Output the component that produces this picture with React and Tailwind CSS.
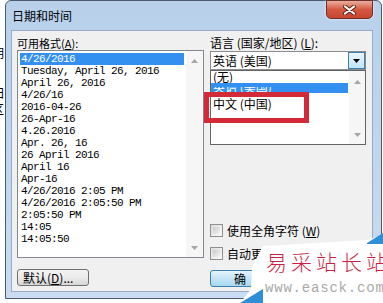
import React from "react";

const formats = [
  "4/26/2016",
  "Tuesday, April 26, 2016",
  "April 26, 2016",
  "4/26/16",
  "2016-04-26",
  "26-Apr-16",
  "4.26.2016",
  "Apr. 26, 16",
  "26 April 2016",
  "April 16",
  "Apr-16",
  "4/26/2016 2:05 PM",
  "4/26/2016 2:05:50 PM",
  "2:05:50 PM",
  "14:05",
  "14:05:50",
];

function UpArrow() {
  return (
    <svg width="7" height="4" viewBox="0 0 7 4">
      <path d="M0 4 L3.5 0 L7 4 Z" fill="#a5a5a5" />
    </svg>
  );
}

function DownArrow({ color = "#a5a5a5" }) {
  return (
    <svg width="7" height="4" viewBox="0 0 7 4">
      <path d="M0 0 L3.5 4 L7 0 Z" fill={color} />
    </svg>
  );
}

function Checkbox({ label }) {
  return (
    <div className="flex items-center h-[13px] gap-[4px]">
      <div className="w-[13px] h-[13px] border border-[#8e8f8f] bg-gradient-to-br from-[#dcdcdc] to-[#fbfbfb] p-[2px]">
        <div className="w-full h-full bg-gradient-to-br from-[#cbcbcb] to-[#f4f4f4]" />
      </div>
      <span className="text-[12px] leading-[13px] text-black whitespace-nowrap">{label}</span>
    </div>
  );
}

export default function App() {
  return (
    <div className="relative w-[383px] h-[303px] bg-white overflow-hidden flex font-['Noto_Sans_CJK_SC',sans-serif]">
      {/* window behind, clipped */}
      <div className="w-[5px] overflow-hidden flex flex-col text-[12px] leading-[14px] text-black">
        <span className="mt-[46px] -ml-[8px]">期</span>
        <span className="mt-[26px] -ml-[8px]">田</span>
        <span className="mt-[2px] -ml-[8px]">区</span>
      </div>

      {/* dialog */}
      <div className="w-[377px] h-[299px] border border-[#4b5a6e] rounded-t-[6px] bg-gradient-to-b from-[#b8d0ea] to-[#c9dcf1] flex flex-col">
        {/* title bar */}
        <div className="h-[29px] flex justify-between">
          <span className="pl-[6px] pt-[7px] text-[12px] leading-[16px] text-black">日期和时间</span>
          <div className="mr-[8px] -mt-[1px] w-[47px] h-[19px] rounded-b-[5px] border border-[#6d2f27] bg-gradient-to-b from-[#e9ad9f] via-[#d4573f] to-[#c64630] flex items-center justify-center shadow-[0_0_3px_rgba(255,255,255,0.8)]">
            <svg width="13" height="10" viewBox="0 0 13 10">
              <path d="M2 1.5 L11 8.5 M11 1.5 L2 8.5" stroke="#5b2219" strokeWidth="4" strokeLinecap="round" />
              <path d="M2 1.5 L11 8.5 M11 1.5 L2 8.5" stroke="#ffffff" strokeWidth="2.2" strokeLinecap="round" />
            </svg>
          </div>
        </div>

        {/* client area */}
        <div className="ml-[5px] mr-[8px] mb-[6px] flex-1 border border-[#97abc4] bg-[#f0f0f0] flex gap-[6px] pl-[5px] pt-[5px] text-black">
          {/* left column */}
          <div className="w-[187px] flex flex-col">
            <span className="h-[14px] text-[11px] leading-[14px]">
              可用格式(<span className="underline">A</span>):
            </span>
            <div className="h-[208px] border border-[#828790] bg-white flex">
              <div className="flex-1 pl-[2px] pr-[2px] pt-[2px] flex flex-col font-['Liberation_Mono',monospace] text-[11px] tracking-[-0.6px] leading-[12px]">
                {formats.map((f, i) => (
                  <div
                    key={f}
                    className={
                      i === 0
                        ? "h-[12px] pl-[1px] bg-[#3390f0] text-white whitespace-nowrap"
                        : "h-[12px] pl-[1px] text-black whitespace-nowrap"
                    }
                  >
                    {f}
                  </div>
                ))}
              </div>
              <div className="w-[17px] bg-[#f6f6f6] flex flex-col items-center justify-between pt-[8px] pb-[7px]">
                <UpArrow />
                <DownArrow />
              </div>
            </div>
            <div className="mt-[11px] w-[72px] h-[17px] border border-[#707070] rounded-[3px] bg-gradient-to-b from-[#f3f3f3] via-[#ebebeb] to-[#d6d6d6] flex items-center pl-[5px] text-[12px] leading-[15px] whitespace-nowrap">
              默认(<span className="underline">D</span>)...
            </div>
          </div>

          {/* right column */}
          <div className="relative w-[156px] flex flex-col">
            <span className="h-[15px] text-[12px] leading-[13px] whitespace-nowrap">
              语言 (国家/地区) (<span className="underline">L</span>):
            </span>
            <div className="h-[19px] border border-[#8a8c90] bg-white flex">
              <span className="flex-1 pl-[2px] text-[12px] leading-[17px]">英语 (美国)</span>
              <div className="w-[17px] border border-[#3c7fb1] bg-gradient-to-b from-[#eaf6fd] to-[#bee6fd] flex items-center justify-center">
                <DownArrow color="#000000" />
              </div>
            </div>

            {/* dropdown popup */}
            <div className="absolute left-0 top-[34px] w-[156px] h-[75px] border border-[#646464] bg-white flex">
              <div className="flex-1 flex flex-col text-[12px]">
                <div className="h-[12px] pl-[2px] leading-[12px]">(无)</div>
                <div className="h-[10px] w-[137px] bg-[#3390f0] overflow-hidden pl-[2px] flex items-end">
                  <div className="h-[6px] overflow-hidden">
                    <div className="-mt-[7px] leading-[14px] text-white">英语 (美国)</div>
                  </div>
                </div>
                <div className="mt-[4px] h-[13px] pl-[2px] leading-[13px]">中文 (中国)</div>
              </div>
              <div className="w-[16px] bg-[#f6f6f6] flex flex-col items-center justify-between pt-[9px] pb-[7px]">
                <UpArrow />
                <DownArrow />
              </div>
            </div>

            <div className="mt-[154px]">
              <Checkbox label={<>使用全角字符 (<span className="underline">W</span>)</>} />
            </div>
            <div className="mt-[10px]">
              <Checkbox label="自动更" />
            </div>
            <div className="mt-[10px] flex">
              <div className="w-[75px] h-[17px] border border-[#3c7fb1] rounded-[3px] bg-gradient-to-b from-[#e5f4fc] via-[#c4e5f6] to-[#a9d9f2] flex items-center pl-[23px] text-[12px] leading-[15px]">
                确
              </div>
            </div>
          </div>
        </div>
      </div>

      {/* red annotation box */}
      <div className="absolute left-[204px] top-[92px] w-[105px] h-[31px] border-[5px] border-[#d22b37]" />

      {/* watermark */}
      <svg className="absolute left-[230px] top-[225px]" width="153" height="78" viewBox="0 0 153 78">
        <polygon points="33,21 137,15 153,10 153,78 10,78 21,64 22,42" fill="#ffffff" />
        <polygon points="137,18 153,8 153,19 137,19" fill="#2f8fd6" />
        <polygon points="10,78 33,64 33,78" fill="#2f8fd6" />
      </svg>
      <span className="absolute left-[266px] top-[248px] text-[21px] leading-[26px] tracking-[4px] font-light text-[#cc1f45] whitespace-nowrap">
        易采站长站
      </span>
      <span className="absolute left-[265px] top-[279px] font-['Liberation_Mono',monospace] text-[14px] leading-[18px] tracking-[0.8px] text-[#a9a9a9] whitespace-nowrap">
        www.easck.com
      </span>
    </div>
  );
}
